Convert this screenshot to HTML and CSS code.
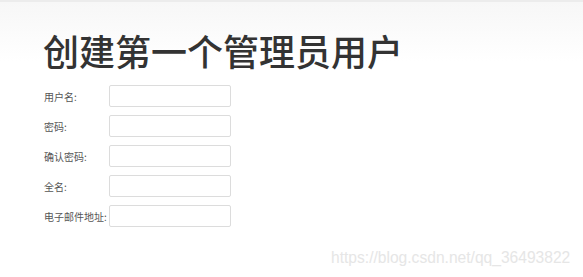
FILE: index.html
```html
<!DOCTYPE html>
<html lang="zh">
<head>
<meta charset="utf-8">
<link rel="stylesheet" href="styles.css">
</head>
<body>
<div class="page">
  <h1 class="title">创建第一个管理员用户</h1>
  <form class="form">
    <div class="row"><label class="label">用户名:</label><input class="field" type="text"></div>
    <div class="row"><label class="label">密码:</label><input class="field" type="password"></div>
    <div class="row"><label class="label">确认密码:</label><input class="field" type="password"></div>
    <div class="row"><label class="label">全名:</label><input class="field" type="text"></div>
    <div class="row"><label class="label">电子邮件地址:</label><input class="field" type="text"></div>
  </form>
  <div class="watermark">https://blog.csdn.net/qq_36493822</div>
</div>
</body>
</html>
```
FILE: styles.css
```css
html, body {
  margin: 0;
  padding: 0;
}
body {
  width: 583px;
  height: 277px;
  overflow: hidden;
  background: #fff;
  font-family: "Noto Sans CJK SC", "Noto Sans", sans-serif;
}
.page {
  position: relative;
  height: 277px;
  border-top: 2px solid #ececec;
  box-sizing: border-box;
  background: linear-gradient(to bottom, #f7f7f7 0px, #fbfbfb 30px, #ffffff 60px);
  padding: 21px 0 0 43px;
}
.title {
  margin: 0;
  font-size: 36px;
  line-height: 54px;
  font-weight: 500;
  color: #333;
  letter-spacing: 0;
}
.form {
  margin: 4px 0 0 1px;
  display: flex;
  flex-direction: column;
}
.row {
  display: flex;
  align-items: center;
  height: 30px;
}
.label {
  width: 65px;
  font-size: 10px;
  color: #555;
}
.field {
  width: 122px;
  height: 22px;
  box-sizing: border-box;
  border: 1px solid #dcdcdc;
  border-radius: 2px;
  background: #fff;
  margin: 0;
  padding: 0 4px;
}
.watermark {
  position: absolute;
  left: 331px;
  top: 247px;
  font-family: "Liberation Sans", Arial, sans-serif;
  font-size: 15.6px;
  color: #e6e6e6;
}
```
